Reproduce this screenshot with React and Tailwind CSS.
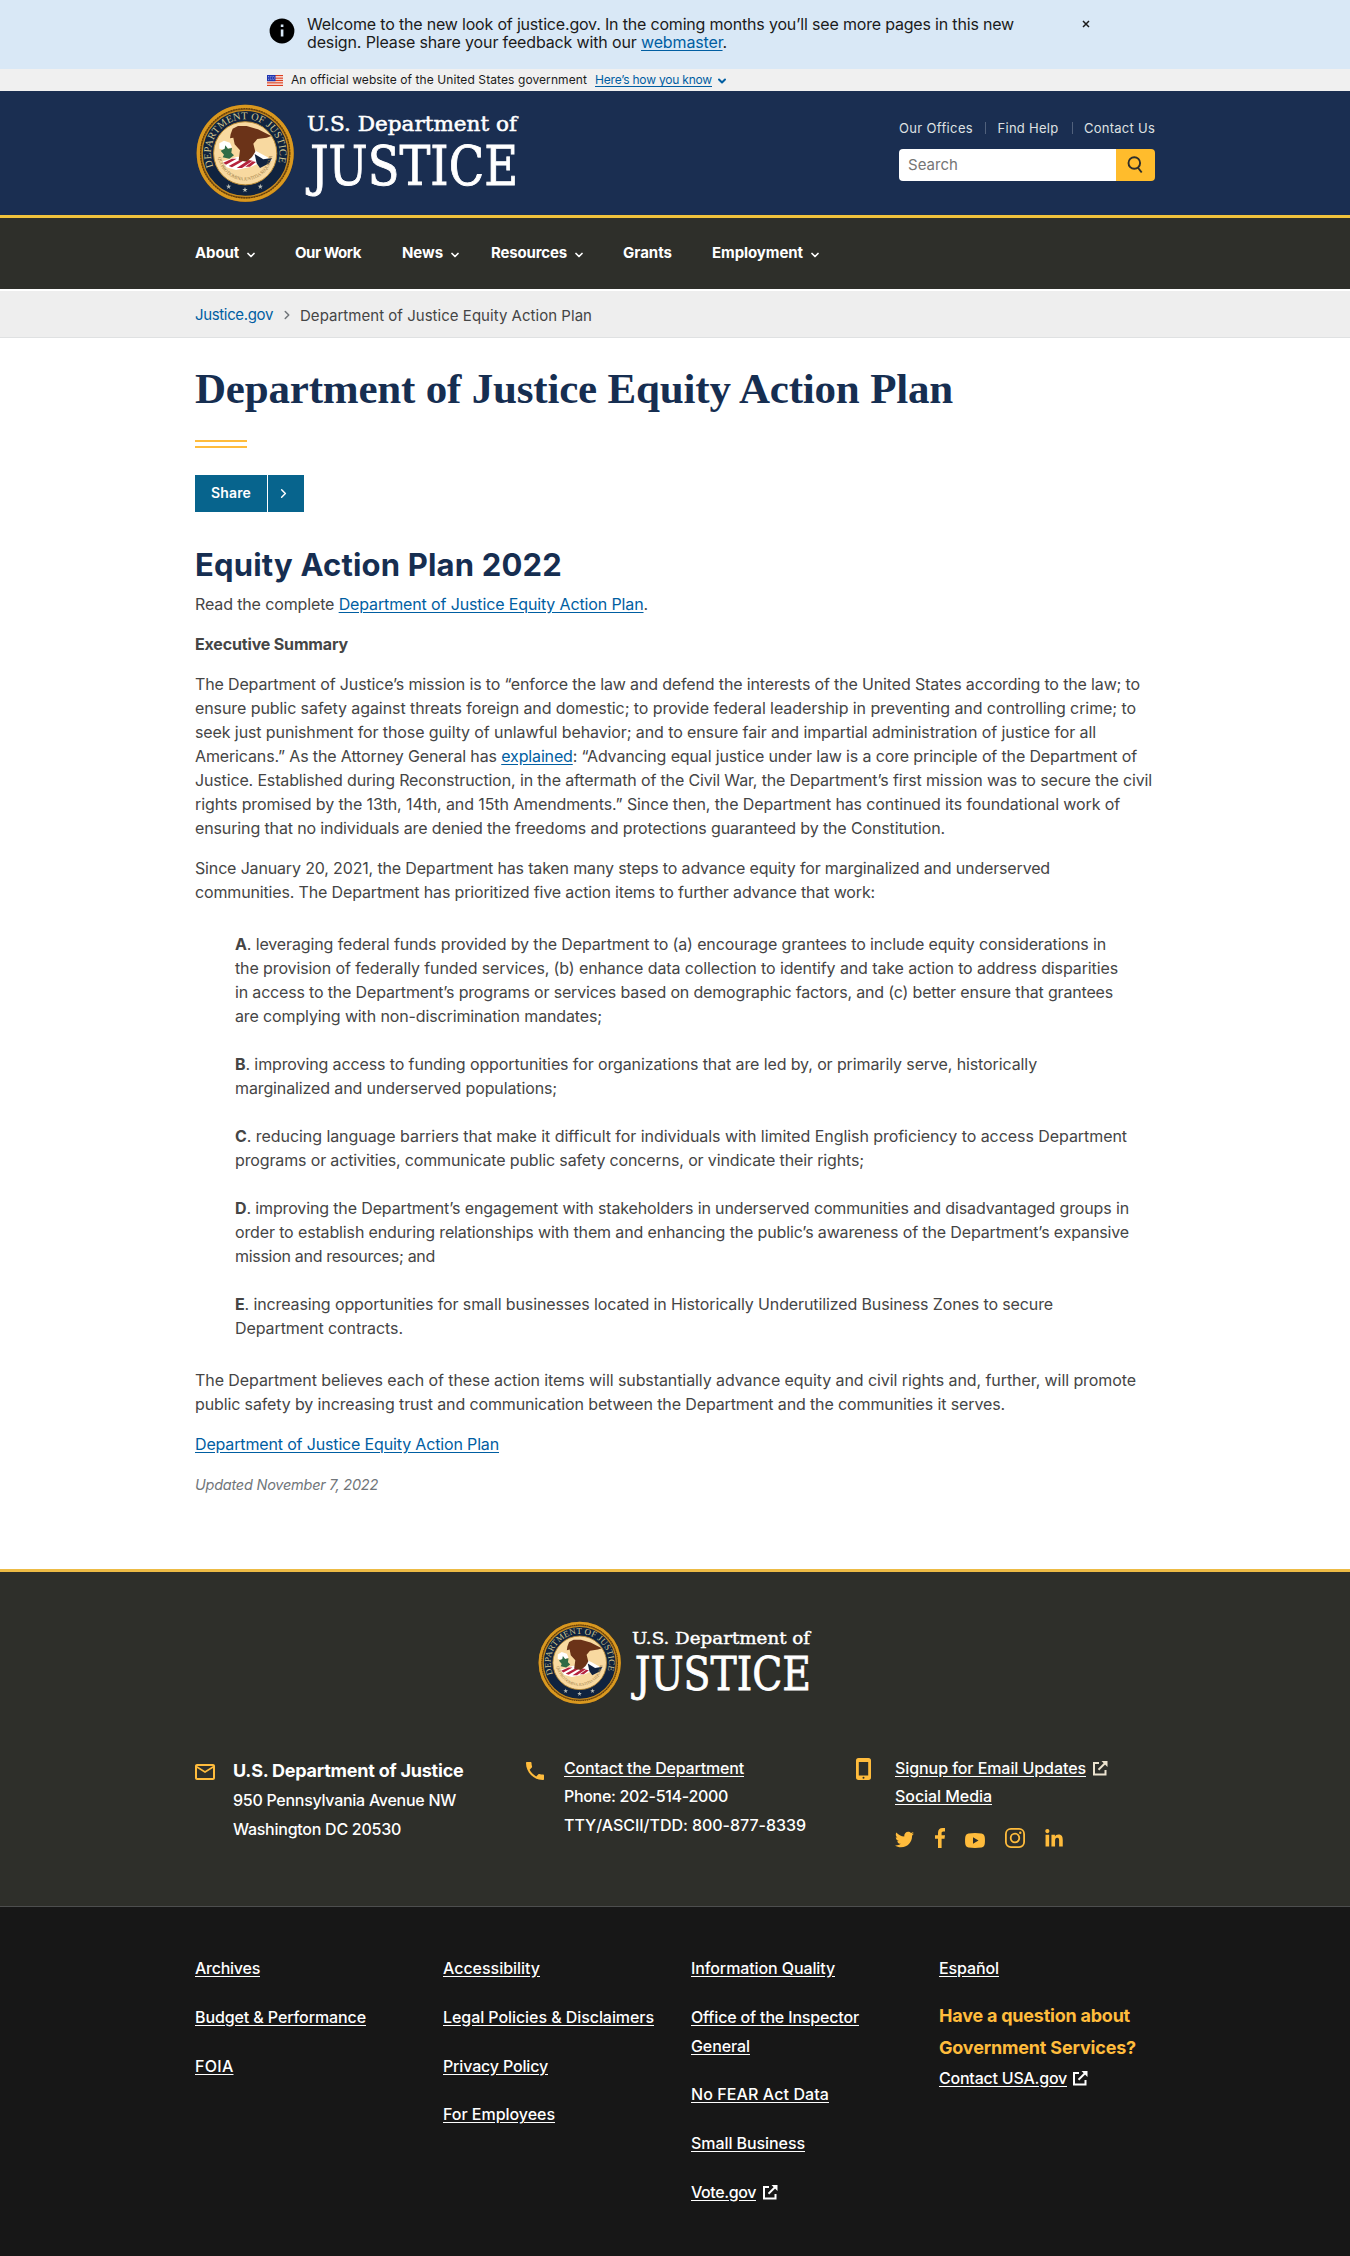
import React, { useLayoutEffect, useRef, useState } from "react";
import { ChevronDown, ChevronRight } from "lucide-react";
import { MdOutlineMail, MdPhone } from "react-icons/md";
import { FaTwitter, FaLinkedinIn } from "react-icons/fa";

/* A single line of text tracked so that it fills the given measure. */
function Line({ w, className = "", children }) {
  const ref = useRef(null);
  const [spacing, setSpacing] = useState(0);
  useLayoutEffect(() => {
    const el = ref.current;
    el.style.letterSpacing = "0px";
    const natural = el.getBoundingClientRect().width;
    const next = (w - natural) / el.textContent.length;
    el.style.letterSpacing = next + "px";
    setSpacing(next);
  }, [w]);
  return (
    <span ref={ref} className={"inline-block whitespace-nowrap " + className} style={{ letterSpacing: spacing + "px" }}>
      {children}
    </span>
  );
}

function Lines({ rows }) {
  return rows.map(([w, content], i) => (
    <span key={i} className="block h-6">
      <Line w={w}>{content}</Line>
    </span>
  ));
}

function A({ children }) {
  return <a className="text-[#005ea2] underline underline-offset-2">{children}</a>;
}

function Logo({ className, id }) {
  return (
    <svg viewBox="0 0 322 99" className={"overflow-visible " + className} role="img" aria-label="U.S. Department of Justice">
      <circle cx="49.2" cy="49.3" r="48.6" fill="#8a5a14" />
      <circle cx="49.2" cy="49.3" r="46.8" fill="none" stroke="#d9981f" strokeWidth="3.4" />
      <circle cx="49.2" cy="49.3" r="44.6" fill="none" stroke="#5e3c0c" strokeWidth="1.2" strokeDasharray="1.6 1" />
      <circle cx="49.2" cy="49.3" r="43" fill="#10233f" stroke="#c98c1f" strokeWidth="1.2" />
      <circle cx="49.2" cy="49.3" r="31.6" fill="#f8d9a0" stroke="#b98a35" strokeWidth="1" />
      <path id={id} d="M17.5 62.5A34.3 34.3 0 1 1 80.9 62.5" fill="none" />
      <text fill="#cfc48e" fontFamily="Liberation Serif, serif" fontSize="10.4">
        <textPath href={"#" + id} textLength="130" lengthAdjust="spacing">DEPARTMENT OF JUSTICE</textPath>
      </text>
      <g transform="translate(-6 -4) scale(.3333)">
        <path d="M88 130l14-8 18 6 6 14-22 8-16-4z" fill="#fff" />
        <path d="M92 152l12-6 2-10 8 10 12-2-2 14 8 8-14 10-20-4 4-8z" fill="#2f6b46" />
        <path d="M98 184l44-14 52 4 20 12-30 14-46 10-28-8z" fill="#fff" />
        <path d="M100 188l26-12 14 0-32 18zM116 198l40-22 12 2-42 24zM140 204l36-24 12 2-32 22zM166 200l22-16 10 2-18 14z" fill="#b5223c" />
        <path d="M184 146l24 12 40 22-34 18-10-10-24-18z" fill="#fff" />
        <path d="M194 162l26 16 26-4-8 16-28 14-10-14z" fill="#12233f" />
        <path d="M122 102l6-16 16-8 26 0 34 10 40 20-14 5-28 4-12 14 6 24-10 16-16 14-24-4 4-30-16-18-4-20-10 2z" fill="#6b3318" />
        <path id={id + "m"} d="M84 172A82 82 0 0 0 246 172" fill="none" />
        <text fill="#9a7a45" fontFamily="Liberation Serif, serif" fontSize="14">
          <textPath href={"#" + id + "m"} textLength="236" lengthAdjust="spacing">QUI PRO DOMINA JUSTITIA SEQUITUR</textPath>
        </text>
        {[[116, 259], [165, 269], [211, 259]].map(([x, y]) => (
          <path key={x} transform={`translate(${x} ${y})`} d="M0-8L2-2 8-2 3 2 5 8 0 4-5 8-3 2-8-2-2-2z" fill="#b9bdb6" />
        ))}
      </g>
      <g fill="#fff" stroke="#fff" fontFamily="DejaVu Serif, serif">
        <text x="111" y="26.8" fontSize="19.5" textLength="210" lengthAdjust="spacingAndGlyphs" strokeWidth=".5">U.S. Department of</text>
        <text x="114" y="80.8" fontSize="54" textLength="208" lengthAdjust="spacingAndGlyphs" strokeWidth=".9">JUSTICE</text>
      </g>
    </svg>
  );
}

function Flag() {
  return (
    <svg viewBox="0 0 16 11" className="h-[11px] w-4">
      <rect width="16" height="11" fill="#fff" />
      <path d="M0 .7h16M0 3.1h16M0 5.5h16M0 7.9h16M0 10.3h16" stroke="#db3e1f" strokeWidth="1.3" />
      <rect width="8.5" height="6.2" fill="#1e33b1" />
      <path d="M1 1.5h7M1.5 3h6.5M1 4.6h7" stroke="#fff" strokeWidth=".6" strokeDasharray=".8 1" />
    </svg>
  );
}

function External({ className = "" }) {
  return (
    <svg viewBox="0 0 16 16" className={"size-4 " + className} fill="none" stroke="currentColor" strokeWidth="2">
      <path d="M7 3H2v11.5h11.5V10" />
      <path d="M6.5 9.8L13.5 2.8" />
      <path d="M9.5 1H15.5V7z" fill="currentColor" stroke="none" />
    </svg>
  );
}

const nav = [
  ["About", 44, true, "w-[100px]"],
  ["Our Work", 66, false, "w-[107px]"],
  ["News", 41, true, "w-[89px]"],
  ["Resources", 76, true, "w-[132px]"],
  ["Grants", 49, false, "w-[89px]"],
  ["Employment", 91, true, "w-[120px]"],
];

function FootLink({ w, children }) {
  return <Line w={w} className="underline underline-offset-2">{children}</Line>;
}

export default function App() {
  return (
    <div className="h-[2256px] w-[1350px] overflow-hidden bg-white font-['Inter',sans-serif] text-base leading-6 text-[#454545]">
      <div className="flex h-[69px] bg-[#d9e8f6] pl-[269px] text-base leading-[18px] text-[#1b1b1b]">
        <svg viewBox="0 0 26 26" className="mt-[18px] size-[26px]">
          <circle cx="13" cy="13" r="12.4" />
          <path d="M11.8 6.5h2.6v2.6h-2.6zM11.8 11.4h2.6v7.2h-2.6z" fill="#d9e8f6" />
        </svg>
        <div className="ml-3 mt-[15px] w-[706px]">
          <div className="h-[18px]"><Line w={707}>Welcome to the new look of justice.gov. In the coming months you’ll see more pages in this new</Line></div>
          <div className="h-[18px]"><Line w={420}>design. Please share your feedback with our <A>webmaster</A>.</Line></div>
        </div>
        <svg viewBox="0 0 8 8" className="ml-[69px] mt-5 size-2" stroke="#1b1b1b" strokeWidth="1.5"><path d="M1 1l6 6M7 1L1 7" /></svg>
      </div>

      <div className="flex h-[22px] items-center bg-[#f0f0f0] pl-[267px] text-xs leading-[22px] text-[#1b1b1b]">
        <Flag />
        <Line w={296} className="ml-2">An official website of the United States government</Line>
        <Line w={117} className="ml-2"><A>Here’s how you know</A></Line>
        <ChevronDown className="ml-1 mt-0.5 size-3 text-[#005ea2]" strokeWidth={4} />
      </div>

      <header className="flex h-[124px] justify-between bg-[#1a2e51] pl-[196px] pr-[195px]">
        <Logo id="seal-top" className="mt-[13px] h-[99px] w-[322px]" />
        <div className="mt-[27px] w-64">
          <div className="flex h-5 items-center text-[13px] leading-5 text-[#dfe1e2]">
            <Line w={74}>Our Offices</Line>
            <span className="ml-[12px] h-3 w-px bg-[#51617c]" />
            <Line w={61} className="ml-[12px]">Find Help</Line>
            <span className="ml-[13px] h-3 w-px bg-[#51617c]" />
            <Line w={71} className="ml-[12px]">Contact Us</Line>
          </div>
          <div className="mt-[11px] flex h-8 overflow-hidden rounded">
            <div className="flex w-[217px] items-center bg-white pl-[9px] text-[15px] text-[#757575]"><Line w={50}>Search</Line></div>
            <div className="flex flex-1 items-center justify-center bg-[#ffbc2c]">
              <svg viewBox="0 0 16 18" className="mb-px mr-0.5 h-[18px] w-4" fill="none" stroke="#2d2e2a" strokeWidth="1.9"><circle cx="7.3" cy="7" r="5.8" /><path d="M10.8 11.5l3.9 5" /></svg>
            </div>
          </div>
        </div>
      </header>

      <nav className="flex h-[74px] items-start border-t-[3px] border-[#f0c23c] bg-[#2e2f2a] pl-[195px] pt-[23px] text-[15px] font-bold leading-6 text-white">
        {nav.map(([label, w, drop, width]) => (
          <div key={label} className={"flex h-6 items-center " + width}>
            <Line w={w}>{label}</Line>
            {drop && <ChevronDown className="ml-1.5 mt-1 size-3" strokeWidth={3.4} />}
          </div>
        ))}
      </nav>

      <div className="flex h-[49px] items-center border-b border-t-2 border-b-[#dfe1e2] border-t-white bg-[#eee] pl-[195px] pt-0.5 text-[15px]">
        <Line w={78} className="text-[#005ea2]">Justice.gov</Line>
        <ChevronRight className="ml-[7px] size-[14px] text-[#71767a]" strokeWidth={2.6} />
        <Line w={292} className="ml-[6px] mt-0.5">Department of Justice Equity Action Plan</Line>
      </div>

      <main className="h-[1231px] px-[195px] pt-[29px]">
        <h1 className="h-11 font-['Liberation_Serif',serif] text-[43px] font-bold leading-[44px] text-[#162e51]">
          <Line w={758}>Department of Justice Equity Action Plan</Line>
        </h1>
        <div className="mt-[29px] h-2 w-[52px] border-y-2 border-[#ffbc3c]" />
        <button className="mt-[27px] flex h-[37px] w-[109px] items-center bg-[#07648d] text-sm font-semibold text-white">
          <span className="flex h-full w-[73px] items-center border-r border-white pb-px pl-4"><Line w={40}>Share</Line></span>
          <ChevronRight className="ml-2 size-[15px]" strokeWidth={2.4} />
        </button>
        <h2 className="mt-[33px] h-10 text-[31px] font-bold leading-10 text-[#162e51]"><Line w={367}>Equity Action Plan 2022</Line></h2>
        <p className="mt-[7px]"><Lines rows={[[453, <>Read the complete <A>Department of Justice Equity Action Plan</A>.</>]]} /></p>
        <p className="mt-4 font-bold"><Lines rows={[[153, "Executive Summary"]]} /></p>
        <p className="mt-4">
          <Lines rows={[
            [945, "The Department of Justice’s mission is to “enforce the law and defend the interests of the United States according to the law; to"],
            [941, "ensure public safety against threats foreign and domestic; to provide federal leadership in preventing and controlling crime; to"],
            [901, "seek just punishment for those guilty of unlawful behavior; and to ensure fair and impartial administration of justice for all"],
            [942, <>Americans.” As the Attorney General has <A>explained</A>: “Advancing equal justice under law is a core principle of the Department of</>],
            [957, "Justice. Established during Reconstruction, in the aftermath of the Civil War, the Department’s first mission was to secure the civil"],
            [925, "rights promised by the 13th, 14th, and 15th Amendments.” Since then, the Department has continued its foundational work of"],
            [750, "ensuring that no individuals are denied the freedoms and protections guaranteed by the Constitution."],
          ]} />
        </p>
        <p className="mt-4">
          <Lines rows={[
            [855, "Since January 20, 2021, the Department has taken many steps to advance equity for marginalized and underserved"],
            [680, "communities. The Department has prioritized five action items to further advance that work:"],
          ]} />
        </p>
        <div className="mt-7 flex flex-col gap-6 pl-10">
          <p><Lines rows={[
            [871, <><b>A</b>. leveraging federal funds provided by the Department to (a) encourage grantees to include equity considerations in</>],
            [883, "the provision of federally funded services, (b) enhance data collection to identify and take action to address disparities"],
            [878, "in access to the Department’s programs or services based on demographic factors, and (c) better ensure that grantees"],
            [367, "are complying with non-discrimination mandates;"],
          ]} /></p>
          <p><Lines rows={[
            [802, <><b>B</b>. improving access to funding opportunities for organizations that are led by, or primarily serve, historically</>],
            [322, "marginalized and underserved populations;"],
          ]} /></p>
          <p><Lines rows={[
            [892, <><b>C</b>. reducing language barriers that make it difficult for individuals with limited English proficiency to access Department</>],
            [629, "programs or activities, communicate public safety concerns, or vindicate their rights;"],
          ]} /></p>
          <p><Lines rows={[
            [894, <><b>D</b>. improving the Department’s engagement with stakeholders in underserved communities and disadvantaged groups in</>],
            [894, "order to establish enduring relationships with them and enhancing the public’s awareness of the Department’s expansive"],
            [200, "mission and resources; and"],
          ]} /></p>
          <p><Lines rows={[
            [818, <><b>E</b>. increasing opportunities for small businesses located in Historically Underutilized Business Zones to secure</>],
            [168, "Department contracts."],
          ]} /></p>
        </div>
        <p className="mt-7">
          <Lines rows={[
            [941, "The Department believes each of these action items will substantially advance equity and civil rights and, further, will promote"],
            [810, "public safety by increasing trust and communication between the Department and the communities it serves."],
          ]} />
        </p>
        <p className="mt-4"><Lines rows={[[304, <A>Department of Justice Equity Action Plan</A>]]} /></p>
        <p className="mt-[17px] text-[14.5px] italic leading-6 text-[#71767a]"><Line w={183}>Updated November 7, 2022</Line></p>
      </main>

      <footer className="text-base font-medium text-white">
        <div className="h-[338px] border-b border-t-[3px] border-b-[#4d4e4e] border-t-[#edbb45] bg-[#2e2f2a] pl-[195px] pt-[49px]">
          <Logo id="seal-bottom" className="ml-[343px] h-[84px] w-[273px]" />
          <div className="mt-[51px] flex leading-[28px]">
            <div className="flex w-[331px]">
              <MdOutlineMail className="-ml-[2px] mt-[4px] size-[24px] text-[#ffbc3c]" />
              <div className="ml-[16px]">
                <div className="h-[29px] text-lg font-bold leading-[29px]"><Line w={230.5}>U.S. Department of Justice</Line></div>
                <div className="mt-px h-[29px]"><Line w={223}>950 Pennsylvania Avenue NW</Line></div>
                <div className="h-[29px]"><Line w={168}>Washington DC 20530</Line></div>
              </div>
            </div>
            <div className="flex w-[330px]">
              <MdPhone className="-ml-[3px] mt-[3px] size-[24px] text-[#ffbc3c]" />
              <div className="ml-[17px] -mt-0.5">
                <div className="h-7"><FootLink w={180}>Contact the Department</FootLink></div>
                <div className="h-[29px]"><Line w={164}>Phone: 202-514-2000</Line></div>
                <div className="h-7"><Line w={242}>TTY/ASCII/TDD: 800-877-8339</Line></div>
              </div>
            </div>
            <div className="flex">
              <svg viewBox="0 0 15 22" className="mt-0.5 h-[22px] w-[15px]">
                <path fillRule="evenodd" fill="#ffbc3c" d="M2.5 0h10A2.5 2.5 0 0 1 15 2.5v17a2.5 2.5 0 0 1-2.5 2.5h-10A2.5 2.5 0 0 1 0 19.5v-17A2.5 2.5 0 0 1 2.5 0zM2.8 4v13.5h9.4V4zM7.5 18.8a1 1 0 1 0 0 2 1 1 0 0 0 0-2z" />
              </svg>
              <div className="ml-[24px] -mt-0.5">
                <div className="flex h-7 items-center"><FootLink w={191}>Signup for Email Updates</FootLink><External className="ml-1.5 mb-px text-[#ece3cf]" /></div>
                <div className="h-[29px]"><FootLink w={97}>Social Media</FootLink></div>
                <div className="mt-[17px] flex h-5 items-end text-[#ffbc3c]">
                  <FaTwitter className="-mb-px size-[19px]" />
                  <svg viewBox="0 0 10 20" className="ml-[21px] h-5 w-2.5" fill="currentColor"><path d="M3 20V10.8H0V7.3h3V5c0-3.3 1.7-5 4.6-5H10v3.5H8.3C7 3.5 6.6 4.2 6.6 5.3v2H10l-.5 3.5H6.6V20z" /></svg>
                  <svg viewBox="0 0 20 15" className="ml-[20px] h-[15px] w-5" fill="currentColor"><path fillRule="evenodd" d="M3.5 .5Q10-.3 16.5 .5 19.5 1 19.8 4.5q.3 3 0 6Q19.5 14 16.5 14.5 10 15.3 3.5 14.5 .5 14 .2 10.5q-.3-3 0-6Q.5 1 3.5 .5zM8 4.3v6.4l5.5-3.2z" /></svg>
                  <svg viewBox="0 0 20 20" className="ml-[20px] size-5" fill="none" stroke="currentColor" strokeWidth="1.8"><rect x=".9" y=".9" width="18.2" height="18.2" rx="5" /><circle cx="10" cy="10" r="4.3" /><circle cx="15.3" cy="4.7" r="1.2" fill="currentColor" stroke="none" /></svg>
                  <FaLinkedinIn className="-mb-px ml-[19px] size-[20px]" />
                </div>
              </div>
            </div>
          </div>
        </div>

        <div className="grid h-[349px] grid-cols-[248px_248px_248px_248px] bg-[#171717] pl-[195px] pt-[47px] leading-[29px]">
          <div className="flex flex-col gap-y-[19.8px]">
            <div className="h-[29px]"><FootLink w={65}>Archives</FootLink></div>
            <div className="h-[29px]"><FootLink w={171}>Budget &amp; Performance</FootLink></div>
            <div className="h-[29px]"><FootLink w={38.5}>FOIA</FootLink></div>
          </div>
          <div className="flex flex-col gap-y-[19.8px]">
            <div className="h-[29px]"><FootLink w={97}>Accessibility</FootLink></div>
            <div className="h-[29px]"><FootLink w={211}>Legal Policies &amp; Disclaimers</FootLink></div>
            <div className="h-[29px]"><FootLink w={105}>Privacy Policy</FootLink></div>
            <div className="h-[29px]"><FootLink w={112}>For Employees</FootLink></div>
          </div>
          <div className="flex flex-col gap-y-[19.8px]">
            <div className="h-[29px]"><FootLink w={144}>Information Quality</FootLink></div>
            <div>
              <div className="h-[29px]"><FootLink w={168}>Office of the Inspector</FootLink></div>
              <div className="h-[28.6px]"><FootLink w={59}>General</FootLink></div>
            </div>
            <div className="h-[29px]"><FootLink w={138}>No FEAR Act Data</FootLink></div>
            <div className="h-[29px]"><FootLink w={114}>Small Business</FootLink></div>
            <div className="flex h-[29px] items-center"><FootLink w={65}>Vote.gov</FootLink><External className="ml-1.5 mb-px" /></div>
          </div>
          <div>
            <div className="h-[29px]"><FootLink w={60}>Español</FootLink></div>
            <div className="mt-[17px] h-8 text-lg font-bold leading-8 text-[#ffbc3c]"><Line w={191}>Have a question about</Line></div>
            <div className="h-8 text-lg font-bold leading-8 text-[#ffbc3c]"><Line w={197}>Government Services?</Line></div>
            <div className="flex h-[29px] items-center"><FootLink w={128}>Contact USA.gov</FootLink><External className="ml-[5px] mb-px" /></div>
          </div>
        </div>
      </footer>
    </div>
  );
}
